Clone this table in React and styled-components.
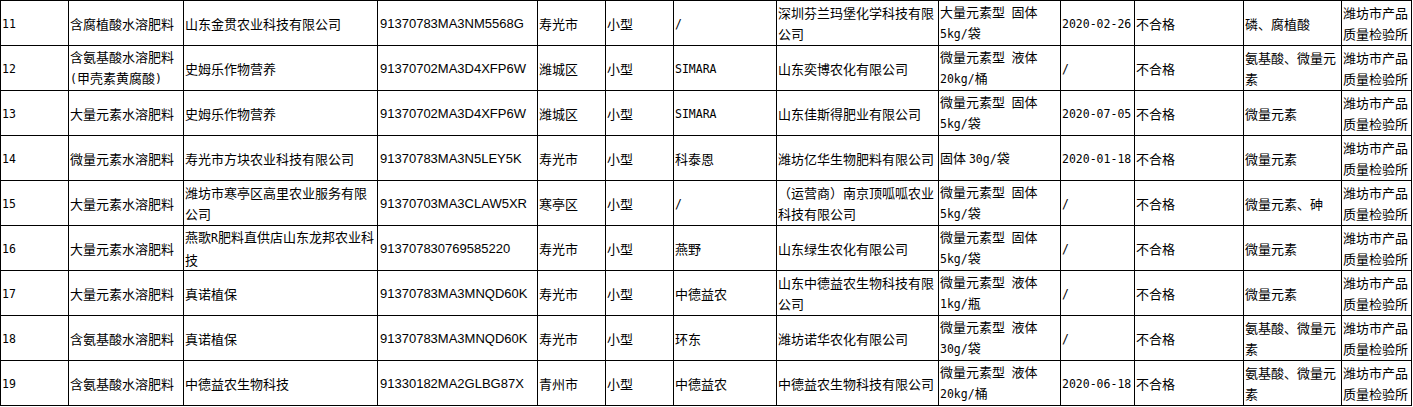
import React from 'react'
import styled, { createGlobalStyle } from 'styled-components'

const GlobalStyle = createGlobalStyle`
    html, body {
        margin: 0;
        padding: 0;
        background: #fff;
    }
`;

const Table = styled.table`
    border-collapse: collapse;
    table-layout: fixed;
    width: 1412px;
    font-family: "Noto Sans CJK SC", sans-serif;
    font-size: 13px;
    line-height: 21px;
    color: #000;
`;

const Cell = styled.td`
    height: 44px;
    padding: 0 1px;
    border: 1px solid #000;
    vertical-align: middle;
    text-align: left;
    overflow: hidden;
    ${({ code }) => code && `
        font-family: "Liberation Sans", Arial, sans-serif;
        font-size: 13px;
        padding-left: 2px;
        white-space: nowrap;
    `}
`;

// the half-width latin part of the song typeface
const Latin = styled.span`
    font-family: "DejaVu Sans Mono", "Liberation Mono", monospace;
    font-size: 11.5px;
`;

const widths = [68, 115, 194, 160, 68, 68, 103, 162, 122, 74, 109, 98, 70];

const rows = [
    ['11', '含腐植酸水溶肥料', '山东金贯农业科技有限公司', '91370783MA3NM5568G', '寿光市', '小型', '/', '深圳芬兰玛堡化学科技有限公司', '大量元素型\u2002固体 5kg/袋', '2020-02-26', '不合格', '磷、腐植酸'],
    ['12', '含氨基酸水溶肥料(甲壳素黄腐酸)', '史姆乐作物营养', '91370702MA3D4XFP6W', '潍城区', '小型', 'SIMARA', '山东奕博农化有限公司', '微量元素型\u2002液体 20kg/桶', '/', '不合格', '氨基酸、微量元素'],
    ['13', '大量元素水溶肥料', '史姆乐作物营养', '91370702MA3D4XFP6W', '潍城区', '小型', 'SIMARA', '山东佳斯得肥业有限公司', '微量元素型\u2002固体 5kg/袋', '2020-07-05', '不合格', '微量元素'],
    ['14', '微量元素水溶肥料', '寿光市方块农业科技有限公司', '91370783MA3N5LEY5K', '寿光市', '小型', '科泰恩', '潍坊亿华生物肥料有限公司', '固体 30g/袋', '2020-01-18', '不合格', '微量元素'],
    ['15', '大量元素水溶肥料', '潍坊市寒亭区高里农业服务有限公司', '91370703MA3CLAW5XR', '寒亭区', '小型', '/', '（运营商）南京顶呱呱农业科技有限公司', '微量元素型\u2002固体 5kg/袋', '/', '不合格', '微量元素、砷'],
    ['16', '大量元素水溶肥料', '燕歌R肥料直供店山东龙邦农业科技', '913707830769585220', '寿光市', '小型', '燕野', '山东绿生农化有限公司', '微量元素型\u2002固体 5kg/袋', '/', '不合格', '微量元素'],
    ['17', '大量元素水溶肥料', '真诺植保', '91370783MA3MNQD60K', '寿光市', '小型', '中德益农', '山东中德益农生物科技有限公司', '微量元素型\u2002液体 1kg/瓶', '/', '不合格', '微量元素'],
    ['18', '含氨基酸水溶肥料', '真诺植保', '91370783MA3MNQD60K', '寿光市', '小型', '环东', '潍坊诺华农化有限公司', '微量元素型\u2002液体 30g/袋', '/', '不合格', '氨基酸、微量元素'],
    ['19', '含氨基酸水溶肥料', '中德益农生物科技', '91330182MA2GLBG87X', '青州市', '小型', '中德益农', '中德益农生物科技有限公司', '微量元素型\u2002液体 20kg/桶', '2020-06-18', '不合格', '氨基酸、微量元素'],
];

const AGENCY = '潍坊市产品质量检验所';

// split a string into latin runs and cjk runs
const renderText = (text) =>
    text.split(/([A-Za-z0-9\-\/()]+)/).filter(Boolean).map((part, i) =>
        /^[A-Za-z0-9\-\/()]+$/.test(part) ? <Latin key={i}>{part}</Latin> : part
    );

const App = () => {
    return (
        <>
            <GlobalStyle />
            <Table>
                <colgroup>
                    {widths.map((w, i) => <col key={i} style={{ width: w }} />)}
                </colgroup>
                <tbody>
                    {rows.map((row) => (
                        <tr key={row[0]}>
                            {row.map((value, i) => (
                                i === 3
                                    ? <Cell key={i} code>{value}</Cell>
                                    : <Cell key={i}>{renderText(value)}</Cell>
                            ))}
                            <Cell>{AGENCY}</Cell>
                        </tr>
                    ))}
                </tbody>
            </Table>
        </>
    )
}

export default App
